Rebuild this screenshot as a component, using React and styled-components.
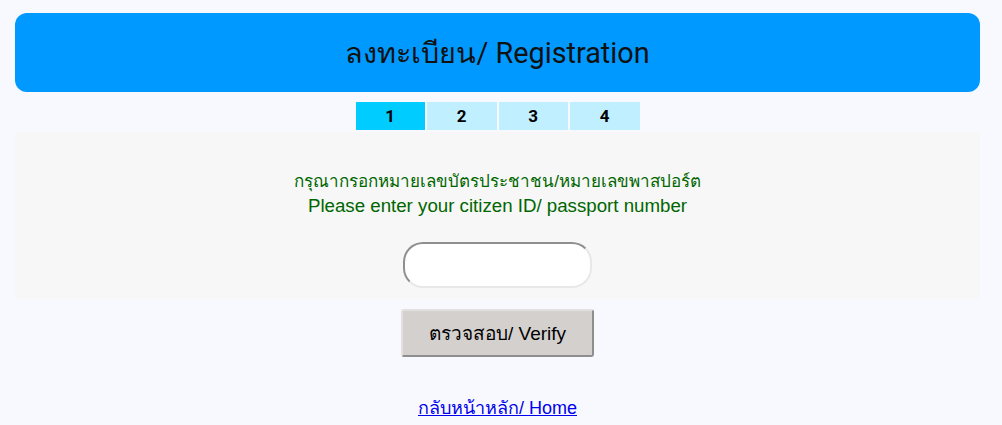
import styled, { createGlobalStyle } from "styled-components"

const Global = createGlobalStyle`
    body {
        margin: 0;
        background: #f8f9fe;
        font-family: "Liberation Sans", "Noto Sans", sans-serif;
    }
`

const steps = [1, 2, 3, 4]

export default function App () {
    return (
        <Page>
            <Global />
            <Header>ลงทะเบียน/ Registration</Header>
            <Steps>
                {steps.map((n) => (
                    <Step key={n} active={n === 1}>{n}</Step>
                ))}
            </Steps>
            <Panel>
                <Prompt>
                    <PromptLine>กรุณากรอกหมายเลขบัตรประชาชน/หมายเลขพาสปอร์ต</PromptLine>
                    <PromptLine english>Please enter your citizen ID/ passport number</PromptLine>
                </Prompt>
                <IdInput type="text" />
            </Panel>
            <Actions>
                <VerifyButton>ตรวจสอบ/ Verify</VerifyButton>
                <HomeLink href="#">กลับหน้าหลัก/ Home</HomeLink>
            </Actions>
        </Page>
    )
}

const Page = styled.div`
    padding: 13px 22px 0 15px;
`

const Header = styled.div`
    height: 79px;
    display: flex;
    align-items: center;
    justify-content: center;
    background: #0099ff;
    border-radius: 12px;
    font-family: "Roboto", "Noto Sans", sans-serif;
    font-size: 28.8px;
    color: #111;
`

const Steps = styled.div`
    display: flex;
    justify-content: center;
    gap: 2px;
    margin: 10px 0 2px;
`

const Step = styled.div`
    width: 69.5px;
    height: 28px;
    display: flex;
    align-items: center;
    justify-content: center;
    background: ${props => props.active ? "#00ccff" : "#c0f0ff"};
    font-family: "Roboto", sans-serif;
    font-weight: 700;
    font-size: 17px;
    color: #000;
`

const Panel = styled.div`
    background: #f7f7f7;
    display: flex;
    flex-direction: column;
    align-items: center;
    padding: 38px 0 11px;
`

const Prompt = styled.div`
    margin: 0 0 24px;
    display: flex;
    flex-direction: column;
    align-items: center;
    color: #006600;
`

const PromptLine = styled.span`
    font-size: ${props => props.english ? "18.7px" : "17px"};
    line-height: 24px;
`

const IdInput = styled.input`
    width: 189px;
    height: 46px;
    box-sizing: border-box;
    border-radius: 20px;
    border: 2px solid #e8e8e8;
    border-top-color: #8f8f8f;
    border-left-color: #8f8f8f;
    background: #fff;
    outline: none;
`

const Actions = styled.div`
    display: flex;
    flex-direction: column;
    align-items: center;
    padding-top: 10px;
`

const VerifyButton = styled.button`
    width: 193px;
    height: 48px;
    background: #d4d0ce;
    border: 2px solid #e2e0df;
    border-right-color: #8e8e8e;
    border-bottom-color: #8e8e8e;
    border-radius: 3px;
    font-family: "Liberation Sans", sans-serif;
    font-size: 19px;
    color: #000;
`

const HomeLink = styled.a`
    margin-top: 36px;
    font-size: 18px;
    color: #0000ee;
    text-decoration: underline;
`
